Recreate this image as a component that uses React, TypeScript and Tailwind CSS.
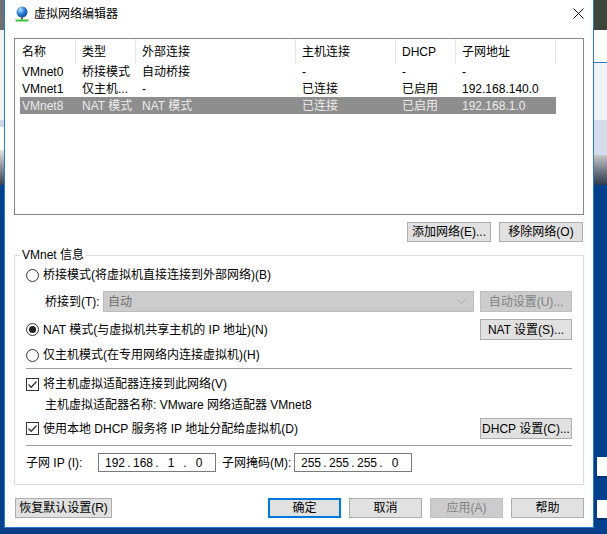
import React from "react";

function Radio({ checked }: { checked?: boolean }) {
  return (
    <div className="w-[13px] h-[13px] rounded-full border border-[#333333] bg-white flex items-center justify-center shrink-0">
      {checked && <div className="w-[7px] h-[7px] rounded-full bg-[#222222]" />}
    </div>
  );
}

function Check() {
  return (
    <div className="w-[13px] h-[13px] border border-[#333333] bg-white shrink-0 flex items-center justify-center">
      <svg width="11" height="11" viewBox="0 0 11 11">
        <path d="M1.5 5.5 L4.2 8.2 L9.5 2.5" fill="none" stroke="#333333" strokeWidth="1.3" />
      </svg>
    </div>
  );
}

function Btn({ w, children, disabled, focus }: { w: string; children: React.ReactNode; disabled?: boolean; focus?: boolean }) {
  const base = "h-full flex items-center justify-center shrink-0 whitespace-nowrap";
  if (disabled)
    return <div className={`${base} ${w} bg-[#cccccc] border border-[#bfbfbf] text-[#838383]`}>{children}</div>;
  if (focus)
    return <div className={`${base} ${w} bg-[#e1e1e1] border-2 border-[#0078d7]`}>{children}</div>;
  return <div className={`${base} ${w} bg-[#e1e1e1] border border-[#adadad]`}>{children}</div>;
}

function IpBox({ parts }: { parts: string[] }) {
  return (
    <div className="w-[118px] h-full border border-[#7a7a7a] bg-white flex items-center pl-[4px]">
      {parts.map((p, i) => (
        <React.Fragment key={i}>
          {i > 0 && <span className="w-[4px] text-center">.</span>}
          <span className="w-[24px] text-center">{p}</span>
        </React.Fragment>
      ))}
    </div>
  );
}

const headers = [
  { t: "名称", w: "w-[61px]", pl: "pl-[7px]" },
  { t: "类型", w: "w-[60px]", pl: "pl-[6px]" },
  { t: "外部连接", w: "w-[160px]", pl: "pl-[6px]" },
  { t: "主机连接", w: "w-[100px]", pl: "pl-[6px]" },
  { t: "DHCP", w: "w-[60px]", pl: "pl-[6px]" },
  { t: "子网地址", w: "w-[100px]", pl: "pl-[6px]" },
];

const rows = [
  ["VMnet0", "桥接模式", "自动桥接", "-", "-", "-"],
  ["VMnet1", "仅主机...", "-", "已连接", "已启用", "192.168.140.0"],
  ["VMnet8", "NAT 模式", "NAT 模式", "已连接", "已启用", "192.168.1.0"],
];

const rowW = ["w-[56px] pl-[2px]", "w-[60px] pl-[6px]", "w-[160px] pl-[6px]", "w-[100px] pl-[6px]", "w-[60px] pl-[6px]", "w-[100px] pl-[6px]"];

function LeftStrip() {
  return (
    <div className="w-[4px] h-full shrink-0 flex flex-col">
      <div className="h-[30px] bg-[#6f6f6f]" />
      <div className="h-[90px] bg-[#f3f3f3]" />
      <div className="h-[7px] bg-[#cdd7e9]" />
      <div className="h-[23px] bg-white" />
      <div className="h-[35px] bg-gradient-to-b from-[#e4e4e4] to-[#3a4456]" />
      <div className="flex-1 bg-[#00418d]" />
    </div>
  );
}

function RightStrip() {
  return (
    <div className="w-[13px] h-full shrink-0 flex flex-col">
      <div className="h-[30px] bg-[#3d463a]" />
      <div className="h-[32px] bg-white" />
      <div className="h-[1px] bg-[#2d7bd2]" />
      <div className="h-[57px] bg-[#f0f3f8]" />
      <div className="h-[35px] bg-[#d3dbec]" />
      <div className="h-[30px] bg-gradient-to-b from-[#c8c8c8] to-[#2e3a4e]" />
      <div className="h-[272px] bg-[#003f8b]" />
      <div className="h-[21px] ml-[3px] bg-white border-b-2 border-[#00306e]" />
      <div className="h-[22px] bg-[#003f8b]" />
      <div className="h-[20px] ml-[3px] bg-white border-b-2 border-[#00306e]" />
      <div className="flex-1 bg-[#003f8b]" />
    </div>
  );
}

function TitleIcon() {
  return (
    <svg width="14" height="16" viewBox="0 0 14 16">
      <defs>
        <radialGradient id="g" cx="0.35" cy="0.3" r="0.8">
          <stop offset="0" stopColor="#bfe3ff" />
          <stop offset="0.5" stopColor="#2a7fd8" />
          <stop offset="1" stopColor="#0b3f8f" />
        </radialGradient>
      </defs>
      <circle cx="7" cy="6" r="5.5" fill="url(#g)" />
      <rect x="6" y="11.5" width="2" height="2" fill="#3d6b3a" />
      <rect x="0.5" y="13.5" width="13" height="2" fill="#3fbf3a" />
    </svg>
  );
}

function Dialog() {
  return (
    <div className="w-[590px] h-[528px] shrink-0 bg-white border-x border-b border-[#2b79d0] flex flex-col">
      {/* title bar */}
      <div className="h-[26px] flex items-center">
        <div className="ml-[10px] mt-[1px]">
          <TitleIcon />
        </div>
        <div className="ml-[5px] mt-[1px]">虚拟网络编辑器</div>
        <svg className="ml-auto mr-[9px]" width="11" height="11" viewBox="0 0 11 11">
          <path d="M0.5 0.5 L10.5 10.5 M10.5 0.5 L0.5 10.5" stroke="#111111" strokeWidth="1" />
        </svg>
      </div>

      {/* list */}
      <div className="ml-[9px] mt-[12px] w-[570px] h-[177px] border border-[#828790] bg-white">
        <div className="flex h-[24px]">
          {headers.map((h) => (
            <div key={h.t} className={`${h.w} ${h.pl} h-full flex items-center pt-[2px] border-r border-[#e5e5e5]`}>
              {h.t}
            </div>
          ))}
        </div>
        {rows.map((r, i) => (
          <div
            key={i}
            className={`ml-[5px] w-[536px] h-[17px] flex items-center pt-[1px] ${i === 2 ? "bg-[#8e8e8e] text-[#ececec]" : ""}`}
          >
            {r.map((c, j) => (
              <div key={j} className={`${rowW[j]} whitespace-nowrap overflow-hidden`}>
                {c}
              </div>
            ))}
          </div>
        ))}
      </div>

      {/* add/remove buttons */}
      <div className="ml-[9px] mt-[7px] w-[570px] h-[20px] flex justify-end gap-[8px] pr-[1px]">
        <Btn w="w-[84px]">添加网络(E)...</Btn>
        <Btn w="w-[84px]">移除网络(O)</Btn>
      </div>

      {/* group box */}
      <div className="relative ml-[9px] mt-[13px] w-[570px] h-[230px] border border-[#dcdcdc] flex flex-col pl-[11px] pr-[11px]">
        <div className="absolute -top-[9px] left-[5px] bg-white px-[2px]">VMnet 信息</div>

        <div className="mt-[9px] h-[20px] flex items-center">
          <Radio />
          <span className="ml-[4px]">桥接模式(将虚拟机直接连接到外部网络)(B)</span>
        </div>

        <div className="mt-[6px] h-[21px] flex items-center">
          <span className="ml-[19px] w-[58px] whitespace-nowrap">桥接到(T):</span>
          <div className="w-[371px] h-full bg-[#cccccc] border border-[#bcbcbc] flex items-center pl-[4px] text-[#6d6d6d]">
            <span>自动</span>
            <svg className="ml-auto mr-[7px]" width="9" height="6" viewBox="0 0 9 6">
              <path d="M0.5 0.5 L4.5 4.5 L8.5 0.5" fill="none" stroke="#a8a8a8" strokeWidth="1" />
            </svg>
          </div>
          <div className="ml-[6px] h-full">
            <Btn w="w-[92px]" disabled>
              自动设置(U)...
            </Btn>
          </div>
        </div>

        <div className="mt-[7px] h-[21px] flex items-center">
          <Radio checked />
          <span className="ml-[4px]">NAT 模式(与虚拟机共享主机的 IP 地址)(N)</span>
          <div className="ml-auto h-full">
            <Btn w="w-[92px]">NAT 设置(S)...</Btn>
          </div>
        </div>

        <div className="mt-[5px] h-[20px] flex items-center">
          <Radio />
          <span className="ml-[4px]">仅主机模式(在专用网络内连接虚拟机)(H)</span>
        </div>

        <div className="mt-[3px] h-px bg-[#a0a0a0]" />

        <div className="mt-[5px] h-[20px] flex items-center">
          <Check />
          <span className="ml-[4px]">将主机虚拟适配器连接到此网络(V)</span>
        </div>

        <div className="mt-[1px] h-[20px] flex items-center pl-[19px]">
          主机虚拟适配器名称: VMware 网络适配器 VMnet8
        </div>

        <div className="mt-[3px] h-[21px] flex items-center">
          <Check />
          <span className="ml-[4px]">使用本地 DHCP 服务将 IP 地址分配给虚拟机(D)</span>
          <div className="ml-auto h-full">
            <Btn w="w-[92px]">DHCP 设置(C)...</Btn>
          </div>
        </div>

        <div className="mt-[6px] h-px bg-[#a0a0a0]" />

        <div className="mt-[7px] h-[19px] flex items-center">
          <span className="w-[72px] whitespace-nowrap">子网 IP (I):</span>
          <IpBox parts={["192", "168", "1", "0"]} />
          <span className="ml-[6px] w-[72px] whitespace-nowrap">子网掩码(M):</span>
          <IpBox parts={["255", "255", "255", "0"]} />
        </div>
      </div>

      {/* bottom buttons */}
      <div className="mt-[13px] h-[20px] flex">
        <div className="ml-[10px] h-full">
          <Btn w="w-[97px]">恢复默认设置(R)</Btn>
        </div>
        <div className="ml-auto mr-[9px] h-full flex gap-[8px]">
          <Btn w="w-[73px]" focus>
            确定
          </Btn>
          <Btn w="w-[73px]">取消</Btn>
          <Btn w="w-[73px]" disabled>
            应用(A)
          </Btn>
          <Btn w="w-[73px]">帮助</Btn>
        </div>
      </div>
    </div>
  );
}

export default function App() {
  return (
    <div className="w-[607px] h-[534px] flex bg-[#053d87] overflow-hidden font-['Liberation_Sans','Noto_Sans_CJK_SC',sans-serif] text-[12px] leading-[16px] text-black">
      <LeftStrip />
      <Dialog />
      <RightStrip />
    </div>
  );
}
